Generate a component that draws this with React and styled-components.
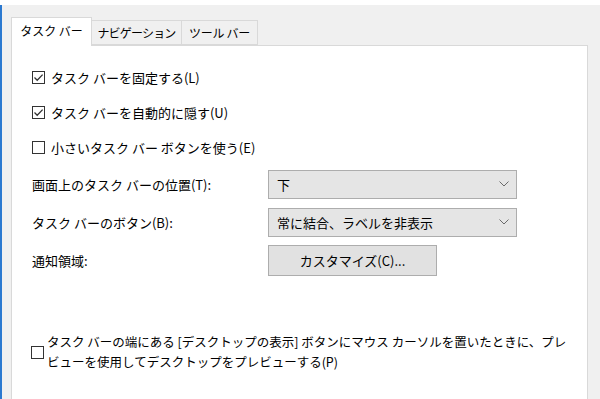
import React from "react";
import styled, { createGlobalStyle } from "styled-components";

const GlobalStyle = createGlobalStyle`
  html, body {
    margin: 0;
    padding: 0;
    background: #ffffff;
    overflow: hidden;
  }
  body {
    font-family: "Noto Sans CJK JP", "Noto Sans", sans-serif;
    font-size: 13px;
    color: #000;
  }
`;

const Screen = styled.div`
  width: 600px;
  height: 399px;
  display: flex;
  flex-direction: column;
  background: #ffffff;
`;

const Window = styled.div`
  margin-top: 5px;
  flex: 1;
  display: flex;
  flex-direction: column;
  background: #f0f0f0;
  border-left: 2px solid #2b79d0;
  padding: 12px 12px 0 9px;
  overflow: hidden;
`;

const TabBar = styled.div`
  display: flex;
  align-items: flex-end;
  height: 28px;
  position: relative;
  z-index: 1;
`;

const Tab = styled.div`
  width: ${(p) => p.w}px;
  height: ${(p) => (p.active ? "29px" : "25px")};
  margin-bottom: ${(p) => (p.active ? "-1px" : "0")};
  box-sizing: border-box;
  display: flex;
  align-items: center;
  justify-content: center;
  padding-bottom: ${(p) => (p.active ? "2px" : "0")};
  background: ${(p) => (p.active ? "#ffffff" : "#f0f0f0")};
  border: 1px solid #d9d9d9;
  border-bottom: ${(p) => (p.active ? "none" : "1px solid #d9d9d9")};
  margin-left: ${(p) => (p.first ? "0" : "-1px")};
  font-size: 12px;
  letter-spacing: ${(p) => p.ls || 0}px;
  line-height: 1;
  white-space: nowrap;
`;

const Panel = styled.div`
  flex: 1;
  background: #ffffff;
  border: 1px solid #d9d9d9;
  border-bottom: none;
  padding: 22px 0 0 20px;
  display: flex;
  flex-direction: column;
`;

const CheckRow = styled.label`
  display: flex;
  align-items: center;
  gap: 6px;
  height: 35px;
  margin-top: ${(p) => (p.first ? "-8px" : "0")};
  line-height: 1;
`;

const Box = styled.span`
  width: 13px;
  height: 13px;
  box-sizing: border-box;
  border: 1px solid #333333;
  background: #ffffff;
  display: flex;
  align-items: center;
  justify-content: center;
  flex-shrink: 0;
`;

const Field = styled.div`
  display: grid;
  grid-template-columns: 236px 249px;
  align-items: center;
  height: 38px;
`;

const Label = styled.span`
  line-height: 1;
`;

const Combo = styled.div`
  height: 29px;
  box-sizing: border-box;
  background: #e5e5e5;
  border: 1px solid #adadad;
  display: flex;
  align-items: center;
  justify-content: space-between;
  padding: 0 7px 0 8px;
  line-height: 1;
`;

const Button = styled.div`
  width: 169px;
  height: 31px;
  box-sizing: border-box;
  background: #e1e1e1;
  border: 1px solid #adadad;
  display: flex;
  align-items: center;
  justify-content: center;
  line-height: 1;
`;

const Spacer = styled.div`
  height: ${(p) => p.h}px;
`;

const LongRow = styled.div`
  display: flex;
  align-items: center;
  gap: 3px;
  margin-left: -1px;
`;

const LongText = styled.div`
  font-size: 12.5px;
  line-height: 20px;
  width: 530px;
`;

const Check = ({ checked }) => (
  <Box>
    {checked && (
      <svg width="11" height="11" viewBox="0 0 11 11">
        <path d="M1.5 5.5 L4.2 8.2 L9.6 2.6" fill="none" stroke="#333" strokeWidth="1.3" />
      </svg>
    )}
  </Box>
);

const Chevron = () => (
  <svg width="10" height="6" viewBox="0 0 10 6">
    <path d="M0.5 0.5 L5 5 L9.5 0.5" fill="none" stroke="#6a6a6a" strokeWidth="1" />
  </svg>
);

const App = () => (
  <>
    <GlobalStyle />
    <Screen>
      <Window>
        <TabBar>
          <Tab active first w={81}>タスク バー</Tab>
          <Tab w={91} ls={-0.8}>ナビゲーション</Tab>
          <Tab w={77} ls={-0.3}>ツール バー</Tab>
        </TabBar>
        <Panel>
          <CheckRow first>
            <Check checked />
            タスク バーを固定する(L)
          </CheckRow>
          <CheckRow>
            <Check checked />
            タスク バーを自動的に隠す(U)
          </CheckRow>
          <CheckRow>
            <Check />
            小さいタスク バー ボタンを使う(E)
          </CheckRow>
          <Field>
            <Label>画面上のタスク バーの位置(T):</Label>
            <Combo>
              <span>下</span>
              <Chevron />
            </Combo>
          </Field>
          <Field>
            <Label>タスク バーのボタン(B):</Label>
            <Combo>
              <span>常に結合、ラベルを非表示</span>
              <Chevron />
            </Combo>
          </Field>
          <Field>
            <Label>通知領域:</Label>
            <Button>カスタマイズ(C)...</Button>
          </Field>
          <Spacer h={53} />
          <LongRow>
            <Check />
            <LongText>
              タスク バーの端にある [デスクトップの表示] ボタンにマウス カーソルを置いたときに、プレビューを使用してデスクトップをプレビューする(P)
            </LongText>
          </LongRow>
        </Panel>
      </Window>
    </Screen>
  </>
);

export default App;
